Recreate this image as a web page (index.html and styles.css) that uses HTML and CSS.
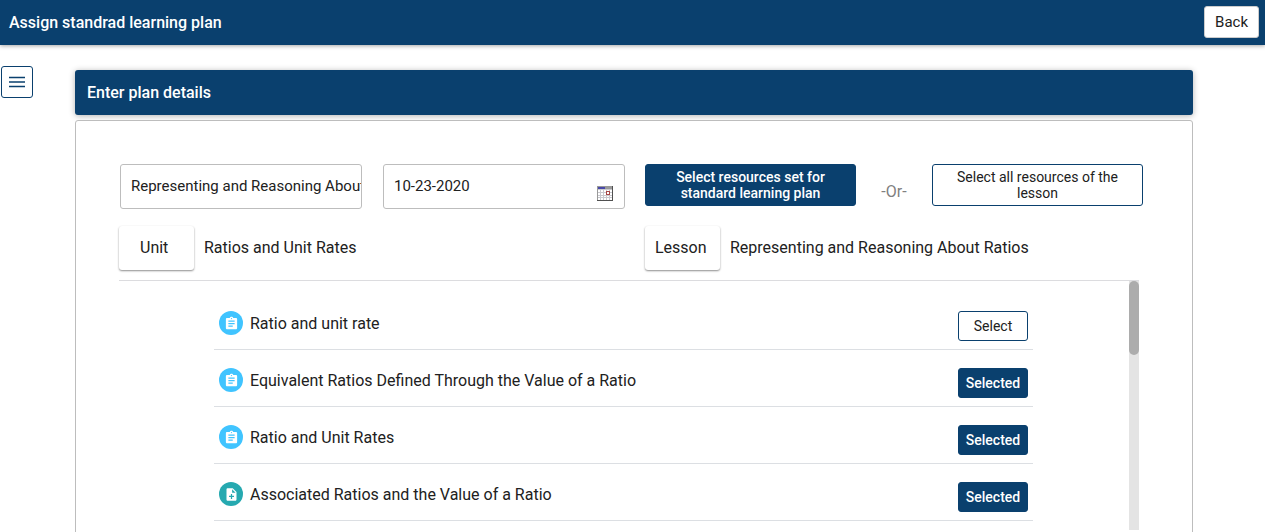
FILE: index.html
```html
<!DOCTYPE html>
<html lang="en">

<head>
    <meta charset="UTF-8">
    <title>Assign standrad learning plan</title>
    <link rel="stylesheet" href="styles.css">
</head>

<body>
    <!-- shared icons -->
    <svg class="sprite" aria-hidden="true">
        <symbol id="icon-assignment" viewBox="0 0 24 24">
            <path d="M19 3h-4.18C14.4 1.84 13.3 1 12 1c-1.3 0-2.4.84-2.82 2H5c-1.1 0-2 .9-2 2v14c0 1.1.9 2 2 2h14c1.1 0 2-.9 2-2V5c0-1.1-.9-2-2-2zm-7 0c.55 0 1 .45 1 1s-.45 1-1 1-1-.45-1-1 .45-1 1-1zm2 14H7v-2h7v2zm3-4H7v-2h10v2zm0-4H7V7h10v2z" />
        </symbol>
        <symbol id="icon-note-add" viewBox="0 0 24 24">
            <path d="M14 2H6c-1.1 0-1.99.9-1.99 2L4 20c0 1.1.89 2 1.99 2H18c1.1 0 2-.9 2-2V8l-6-6zm2 14h-3v3h-2v-3H8v-2h3v-3h2v3h3v2zm-3-7V3.500L18.500 9H13z" />
        </symbol>
    </svg>

    <header class="topbar">
        <h1>Assign standrad learning plan</h1>
        <button type="button" class="back">Back</button>
    </header>

    <main class="page">
        <button type="button" class="menu" aria-label="Menu">
            <svg width="16" height="12" viewBox="0 0 16 12">
                <path d="M0 1.500h16M0 6h16M0 10.500h16" />
            </svg>
        </button>

        <div class="plan">
            <h2>Enter plan details</h2>

            <section class="card">
                <div class="halves">
                    <div class="fields">
                        <input type="text" aria-label="Plan name" value="Representing and Reasoning About Ratios">
                        <div class="date">
                            <input type="text" aria-label="Start date" value="10-23-2020">
                            <button type="button" class="calendar" aria-label="Open calendar">
                                <svg width="16" height="15" viewBox="0 0 16 15" shape-rendering="crispEdges">
                                    <path fill="#c9c9cf" d="M0 0h16v15H0z" />
                                    <path fill="#fff" d="M1 4h2v2H1zM4 4h2v2H4zM7 4h2v2H7zM10 4h2v2h-2zM13 4h2v2h-2zM1 7h2v2H1zM4 7h2v2H4zM7 7h2v2H7zM13 7h2v2h-2zM1 10h2v1H1zM4 10h2v1H4zM7 10h2v1H7zM10 10h2v1h-2zM13 10h2v1h-2zM1 12h2v2H1zM4 12h2v2H4zM7 12h2v2H7zM10 12h2v2h-2zM13 12h2v2h-2z" />
                                    <path fill="#999" d="M0 0h16v3H0zM0 3h1v12H0z" />
                                    <path fill="#4848a8" d="M1 1h7v2H1z" />
                                    <path fill="#505050" d="M15 0h1v15h-1zM0 14h16v1H0z" />
                                    <path fill="#fff" stroke="#a84848" d="M9.500 5.500h3v3h-3z" />
                                </svg>
                            </button>
                        </div>
                    </div>
                    <div class="choices">
                        <button type="button" class="btn filled wide">Select resources set for standard learning plan</button>
                        <span class="or">-Or-</span>
                        <button type="button" class="btn wide">Select all resources of the lesson</button>
                    </div>
                    <div class="info">
                        <span class="tag unit">Unit</span>
                        <span>Ratios and Unit Rates</span>
                    </div>
                    <div class="info">
                        <span class="tag">Lesson</span>
                        <span>Representing and Reasoning About Ratios</span>
                    </div>
                </div>

                <div class="list">
                    <ul class="resources">
                        <li>
                            <span class="icon"><svg><use href="#icon-assignment" /></svg></span>
                            <span class="name">Ratio and unit rate</span>
                            <button type="button" class="btn">Select</button>
                        </li>
                        <li>
                            <span class="icon"><svg><use href="#icon-assignment" /></svg></span>
                            <span class="name">Equivalent Ratios Defined Through the Value of a Ratio</span>
                            <button type="button" class="btn filled">Selected</button>
                        </li>
                        <li>
                            <span class="icon"><svg><use href="#icon-assignment" /></svg></span>
                            <span class="name">Ratio and Unit Rates</span>
                            <button type="button" class="btn filled">Selected</button>
                        </li>
                        <li>
                            <span class="icon teal"><svg><use href="#icon-note-add" /></svg></span>
                            <span class="name">Associated Ratios and the Value of a Ratio</span>
                            <button type="button" class="btn filled">Selected</button>
                        </li>
                    </ul>
                    <div class="track">
                        <div class="thumb"></div>
                    </div>
                </div>
            </section>
        </div>
    </main>
</body>

</html>
```
FILE: styles.css
```css
* {
    box-sizing: border-box;
}

body {
    margin: 0;
    height: 100vh;
    overflow: hidden;
    background-color: #fff;
    color: #212121;
    font-family: Roboto, sans-serif;
    font-size: 16px;
    line-height: 24px;
}

button,
input {
    font-family: inherit;
    color: inherit;
}

.sprite {
    display: none;
}

.topbar {
    display: flex;
    align-items: flex-start;
    justify-content: space-between;
    height: 45px;
    padding: 6px 6px 0 9px;
    background-color: #0a406e;
    box-shadow: 0 1px 4px rgba(0, 0, 0, 0.35);
}

h1,
h2 {
    margin: 0;
    color: #fff;
    font-size: 16px;
    font-weight: 500;
}

h1 {
    padding-top: 5px;
}

.back {
    height: 32px;
    padding: 0 10px;
    border: 1px solid #ccc;
    border-radius: 3px;
    background-color: #fff;
    font-size: 15px;
}

.page {
    display: flex;
    align-items: flex-start;
    gap: 42px;
    padding: 21px 72px 0 1px;
}

.menu {
    display: flex;
    align-items: center;
    justify-content: center;
    width: 32px;
    height: 32px;
    padding: 0;
    border: 1px solid #0a406e;
    border-radius: 3px;
    background-color: #fff;
}

.menu path {
    stroke: #0a406e;
    stroke-width: 1.6;
}

.plan {
    flex: 1;
    padding-top: 4px;
}

h2 {
    padding: 11px 12px 10px;
    border-radius: 3px;
    background-color: #0a406e;
    box-shadow: 0 1px 6px rgba(0, 0, 0, 0.3);
}

.card {
    margin-top: 5px;
    padding: 43px 41px 30px 43px;
    border: 1px solid #bdbdbd;
    border-radius: 3px;
    background-color: #fff;
}

.halves {
    display: grid;
    grid-template-columns: 1fr 1fr;
    gap: 17px 20px;
}

.fields {
    display: grid;
    grid-template-columns: 1fr 1fr;
    gap: 21px;
    padding-left: 1px;
}

.fields input {
    width: 100%;
    height: 45px;
    padding: 0 0 2px 10px;
    border: 1px solid #bdbdbd;
    border-radius: 3px;
    background-color: #fff;
    font-size: 15px;
}

.date {
    position: relative;
}

.calendar {
    position: absolute;
    right: 12px;
    bottom: 8px;
    padding: 0;
    border: 0;
    background: none;
}

.calendar svg {
    display: block;
}

.choices {
    display: flex;
    align-items: flex-start;
    justify-content: space-between;
    padding-right: 8px;
}

.or {
    padding-top: 16px;
    color: #808080;
}

.btn {
    width: 70px;
    height: 30px;
    padding: 0;
    border: 1px solid #0a406e;
    border-radius: 3px;
    background-color: #fff;
    font-size: 14px;
    line-height: 16px;
}

.wide {
    width: 211px;
    height: 42px;
    padding: 0 20px;
}

.filled {
    background-color: #0a406e;
    color: #fff;
    font-weight: 500;
}

.info {
    display: flex;
    align-items: center;
    gap: 10px;
}

.tag {
    width: 75px;
    padding: 10px;
    border-radius: 3px;
    box-shadow: 0 1px 2px rgba(0, 0, 0, 0.45);
}

.unit {
    padding-left: 21px;
}

.list {
    display: flex;
    height: 250px;
    margin: 10px 12px 0 0;
    border-top: 1px solid #dcdcdf;
}

.resources {
    flex: 1;
    margin: 0;
    padding: 12px 96px 0 95px;
    list-style: none;
}

.resources li {
    display: flex;
    align-items: flex-start;
    padding: 18px 5px 8px;
    border-bottom: 1px solid #dcdfe3;
}

.icon {
    display: flex;
    align-items: center;
    justify-content: center;
    width: 24px;
    height: 24px;
    margin-right: 7px;
    border-radius: 50%;
    background-color: #40c4ff;
}

.icon svg {
    width: 15px;
    height: 15px;
    fill: #fff;
}

.teal {
    background-color: #26a9b0;
}

.name {
    flex: 1;
    padding-top: 1px;
}

.track {
    width: 10px;
    background-color: #e4e4e4;
}

.thumb {
    height: 74px;
    border-radius: 5px;
    background-color: #acacac;
}
```
